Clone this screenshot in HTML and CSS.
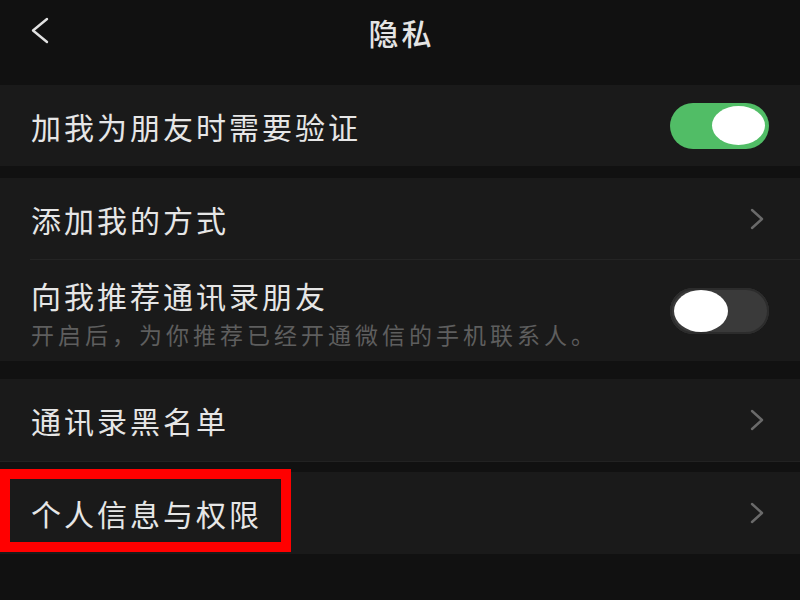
FILE: index.html
```html
<!DOCTYPE html>
<html lang="zh-CN">
<head>
<meta charset="utf-8">
<title>隐私</title>
<link rel="stylesheet" href="styles.css">
</head>
<body>
<div class="page">
  <header class="nav">
    <svg class="back" width="20" height="27" viewBox="0 0 20 27" aria-hidden="true">
      <polyline points="17,2 3,13.5 17,25" fill="none" stroke="#e2e2e2" stroke-width="2.4" stroke-linecap="round" stroke-linejoin="round"/>
    </svg>
    <h1 class="title">隐私</h1>
  </header>

  <section class="group g1">
    <div class="row">
      <span class="label">加我为朋友时需要验证</span>
      <span class="switch on"><span class="knob"></span></span>
    </div>
  </section>

  <section class="group g2">
    <div class="row divided">
      <span class="label">添加我的方式</span>
      <svg class="chev" width="16" height="22" viewBox="0 0 16 22" aria-hidden="true"><polyline points="3,2 13,11 3,20" fill="none" stroke="#6a6a6a" stroke-width="2.4" stroke-linecap="round" stroke-linejoin="round"/></svg>
    </div>
    <div class="row tall">
      <div class="texts">
        <span class="label">向我推荐通讯录朋友</span>
        <span class="sub">开启后，为你推荐已经开通微信的手机联系人。</span>
      </div>
      <span class="switch off"><span class="knob"></span></span>
    </div>
  </section>

  <section class="group g3">
    <div class="row">
      <span class="label">通讯录黑名单</span>
      <svg class="chev" width="16" height="22" viewBox="0 0 16 22" aria-hidden="true"><polyline points="3,2 13,11 3,20" fill="none" stroke="#6a6a6a" stroke-width="2.4" stroke-linecap="round" stroke-linejoin="round"/></svg>
    </div>
  </section>

  <section class="group g4">
    <div class="row">
      <span class="label">个人信息与权限</span>
      <svg class="chev" width="16" height="22" viewBox="0 0 16 22" aria-hidden="true"><polyline points="3,2 13,11 3,20" fill="none" stroke="#6a6a6a" stroke-width="2.4" stroke-linecap="round" stroke-linejoin="round"/></svg>
    </div>
    <div class="highlight"></div>
  </section>
</div>
</body>
</html>
```

FILE: styles.css
```css
* { box-sizing: border-box; }

html, body {
  margin: 0;
  padding: 0;
  background: #111111;
}

body {
  width: 800px;
  height: 600px;
  overflow: hidden;
  font-family: "Noto Sans CJK SC", "Noto Sans", sans-serif;
  color: #e6e6e6;
}

.page {
  display: flex;
  flex-direction: column;
}

.nav {
  height: 85px;
  display: flex;
  align-items: flex-start;
  justify-content: center;
  position: relative;
  background: #111111;
}

.back {
  position: absolute;
  left: 30px;
  top: 17px;
}

.title {
  margin: 10px 0 0 0;
  font-size: 30px;
  line-height: 44px;
  font-weight: 500;
  letter-spacing: 3px;
  padding-left: 3px;
  color: #e4e4e4;
}

.group {
  background: #1a1a1a;
  position: relative;
}

.g1 { height: 81px; }
.g2 { margin-top: 12px; height: 183px; }
.g3 { margin-top: 18px; height: 83px; border-bottom: 1px solid #222222; }
.g4 { margin-top: 10px; height: 82px; }

.row {
  display: flex;
  align-items: center;
  justify-content: space-between;
  height: 81px;
  padding: 0 31px 0 31px;
}

.g3 .row { height: 82px; }

.row.divided {
  height: 82px;
  position: relative;
}

.row.divided::after {
  content: "";
  position: absolute;
  left: 30px;
  right: 0;
  bottom: 0;
  height: 1px;
  background: #242424;
}

.row.tall {
  height: 101px;
}

.label {
  font-size: 30px;
  line-height: 44px;
  letter-spacing: 3px;
  white-space: nowrap;
}

.texts {
  display: flex;
  flex-direction: column;
  padding-top: 4px;
}

.texts .label {
  line-height: 43px;
}

.sub {
  font-size: 23px;
  line-height: 34px;
  letter-spacing: 4px;
  color: #5e5e5e;
  white-space: nowrap;
}

.chev {
  margin-right: 4px;
}

.switch {
  width: 99px;
  height: 46px;
  border-radius: 23px;
  display: flex;
  align-items: center;
  padding: 0 4px;
  flex-shrink: 0;
}

.switch.on {
  background: #51bd66;
  justify-content: flex-end;
}

.switch.off {
  background: #3a3a3a;
  box-shadow: inset 0 0 0 2px #2c2c2c;
  justify-content: flex-start;
}

.knob {
  width: 53px;
  height: 39px;
  border-radius: 50%;
  background: #ffffff;
}

.switch.off .knob {
  width: 54px;
  height: 42px;
}

.highlight {
  position: absolute;
  left: 0;
  top: -3px;
  width: 291px;
  height: 83px;
  border: 10px solid #ff0000;
}
```
